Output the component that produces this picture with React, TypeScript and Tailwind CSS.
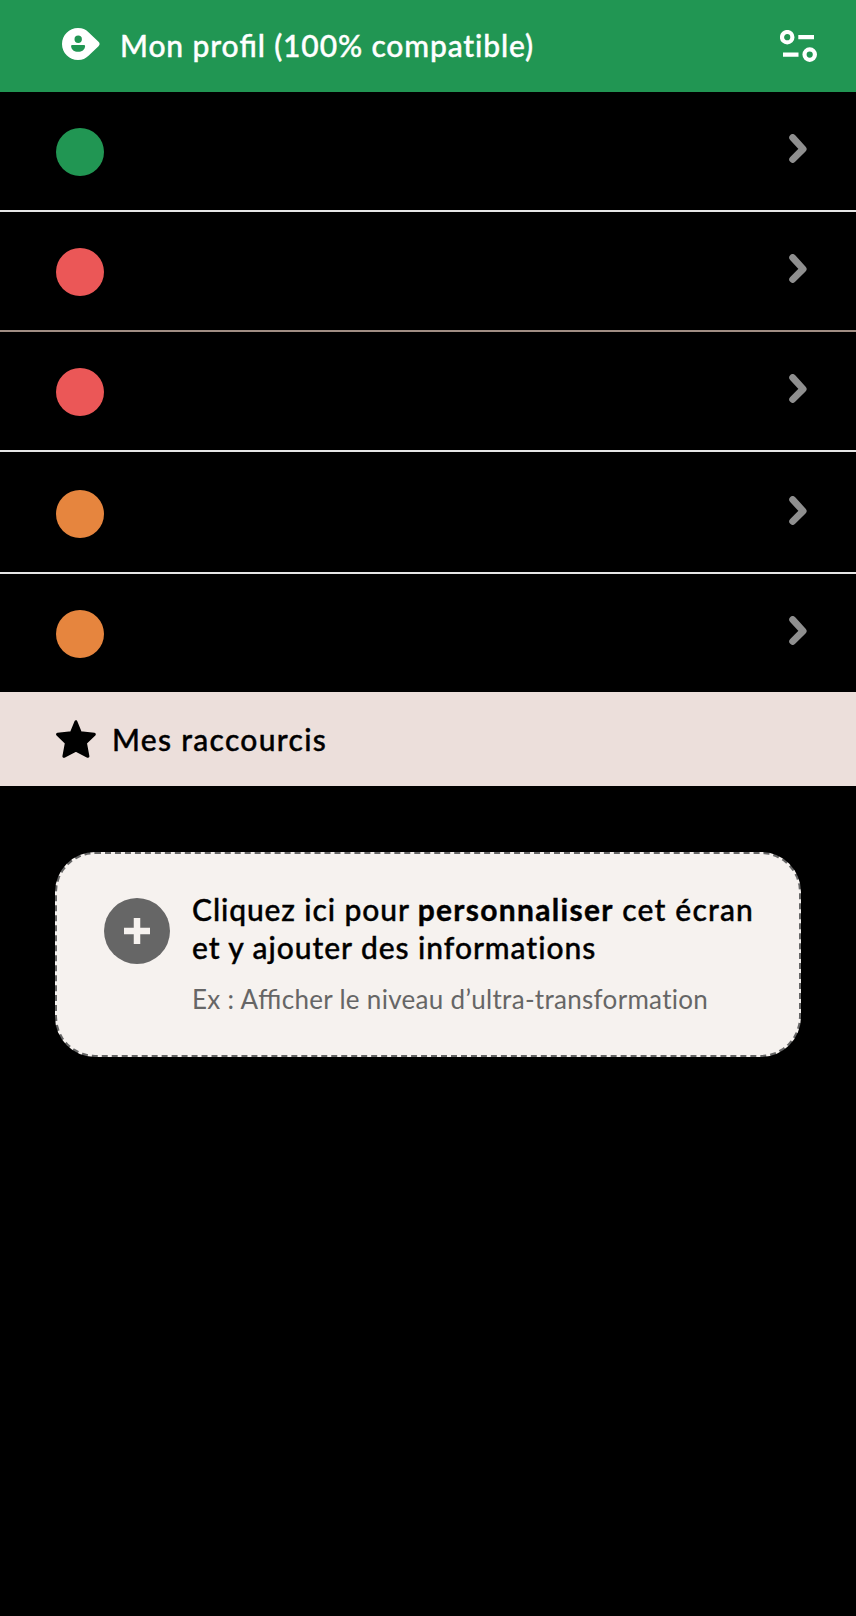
const rows = [
  { color: 'bg-[#219653]', box: 'h-[120px] pt-9', line: 'border-b-2 border-[#e6e6e6]' },
  { color: 'bg-[#eb5757]', box: 'h-[120px] pt-9', line: 'border-b-2 border-[#a08d83]' },
  { color: 'bg-[#eb5757]', box: 'h-[120px] pt-9', line: 'border-b-2 border-[#e6e6e6]' },
  { color: 'bg-[#e6853e]', box: 'h-[122px] pt-[38px]', line: 'border-b-2 border-[#e6e6e6]' },
  { color: 'bg-[#e6853e]', box: 'h-[118px] pt-9', line: '' },
];

function ProfileIcon() {
  return (
    <svg className="mt-7 h-8 w-[38px] shrink-0" viewBox="0 0 38 32">
      <path
        fill="#fff"
        fillRule="evenodd"
        d="M16 0C7.2 0 0 7.2 0 16s7.2 16 16 16c4.700 0 7.500-1.400 10.500-4.200L36.500 18.200Q38.700 16 36.500 13.800L26.500 4.200C23.500 1.400 20.700 0 16 0ZM16.200 7.600a3.700 3.700 0 1 1 0 7.400a3.700 3.700 0 0 1 0-7.400ZM10.200 17H22Q23.200 17 23.100 18.200C22.700 21.800 20 23.800 16.100 23.800S9.500 21.800 9.100 18.200Q9 17 10.200 17Z"
      />
    </svg>
  );
}

function SettingsIcon() {
  return (
    <svg className="mt-[30px] h-8 w-[37px]" viewBox="0 0 37 32" fill="none" stroke="#fff" strokeWidth="4.200">
      <circle cx="7.200" cy="7.200" r="5.200" />
      <path d="M18.300 7.200H34M3 24.600H18.500" />
      <circle cx="29.700" cy="24.600" r="5.200" />
    </svg>
  );
}

function Chevron() {
  return (
    <svg className="mt-1.5 h-[29px] w-[18px]" viewBox="0 0 18 29" fill="none" stroke="#8f8f8f" strokeWidth="6.900" strokeLinecap="round" strokeLinejoin="round">
      <path d="M3.700 3.600L14.100 15L3.700 25.400" />
    </svg>
  );
}

export default function App() {
  return (
    <main className="h-[1616px] w-[856px] bg-black font-['Lato','Noto_Sans',sans-serif]">
      <header className="flex h-[92px] items-start bg-[#219653] pr-[39px] pl-[62px]">
        <ProfileIcon />
        <h1 className="mt-[26px] ml-5 text-[30px] leading-[38px] font-medium tracking-[0.87px] whitespace-nowrap text-white [-webkit-text-stroke:0.4px_#fff]">
          Mon pro<span className="[font-feature-settings:'liga']">fi</span>l (100% compatible)
        </h1>
        <div className="ml-auto">
          <SettingsIcon />
        </div>
      </header>
      <ul>
        {rows.map((row, i) => (
          <li key={i} className={`flex items-start justify-between pr-[49px] pl-14 ${row.box} ${row.line}`}>
            <span className={`size-12 rounded-full ${row.color}`} />
            <Chevron />
          </li>
        ))}
      </ul>
      <section className="flex h-[94px] items-start bg-[#ecdfdb] pl-14">
        <svg className="mt-7 h-[39px] w-10" viewBox="0 0 40 39" stroke="#000" strokeWidth="3" strokeLinejoin="round">
          <path d="M19.900 1.700L24.400 12.800L38.300 14.300L29.400 22.800L31.900 36.300L19.900 30.200L7.900 36.300L10.400 22.800L1.600 14.300L15.400 12.800Z" />
        </svg>
        <h2 className="mt-7 ml-4 text-[30px] leading-[38px] font-medium tracking-[1.3px] text-black [-webkit-text-stroke:0.4px_#000]">Mes raccourcis</h2>
      </section>
      <button className="mt-[66px] ml-[55px] flex h-[205px] w-[746px] items-start rounded-[40px] border-2 border-dashed border-[#666] bg-[#f6f2ef] pl-[47px] text-left">
        <svg className="mt-11 size-[66px] shrink-0" viewBox="0 0 66 66">
          <circle cx="33" cy="33" r="33" fill="#666" />
          <path d="M20 33H46M33 20V46" stroke="#f6f2ef" strokeWidth="6.500" />
        </svg>
        <span className="mt-9 ml-[22px] whitespace-nowrap">
          <span className="block text-[30px] leading-[38px] font-medium tracking-[0.9px] text-black [-webkit-text-stroke:0.4px_#000]">
            Cliquez ici pour <b className="font-bold tracking-[1.3px]">personnaliser</b> <span className="tracking-[1.2px]">cet écran</span>
          </span>
          <span className="block text-[30px] leading-[38px] font-medium tracking-[0.95px] text-black [-webkit-text-stroke:0.4px_#000]">et y ajouter des informations</span>
          <span className="mt-[17px] block text-[26px] leading-8 tracking-[0.3px] text-[#666]">
            Ex : A<span className="[font-feature-settings:'liga']">ffi</span>cher le niveau d’ultra-transformation
          </span>
        </span>
      </button>
    </main>
  );
}
